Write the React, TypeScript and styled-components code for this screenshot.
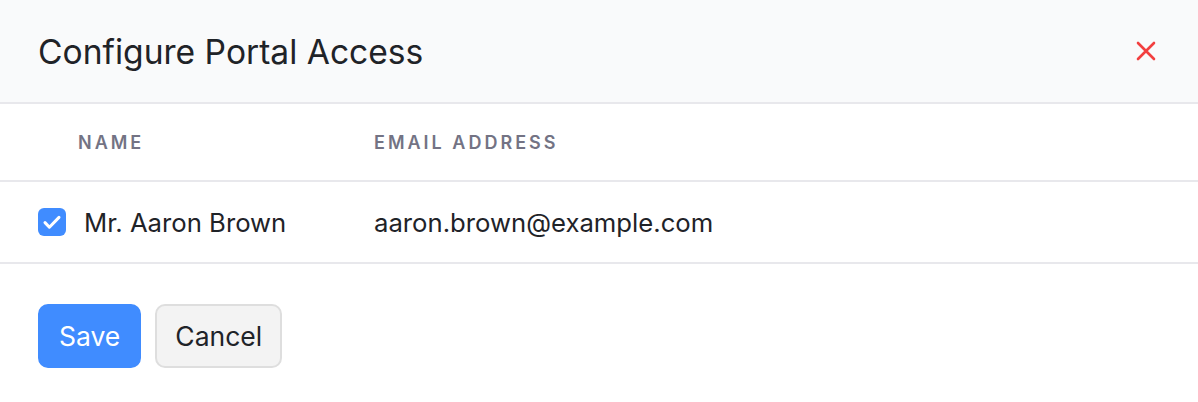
import styled, { createGlobalStyle } from "styled-components";

const GlobalStyle = createGlobalStyle`
  html, body {
    margin: 0;
    padding: 0;
    background: #ffffff;
  }
  body {
    font-family: Inter, "Noto Sans", sans-serif;
    -webkit-font-smoothing: antialiased;
  }
`;

const App = () => {
  return (
    <SModal>
      <GlobalStyle />
      <SHeader>
        <STitle>Configure Portal Access</STitle>
        <SCloseButton aria-label="Close">
          <svg width="20" height="20" viewBox="0 0 20 20" fill="none">
            <path
              d="M2 2L18 18M18 2L2 18"
              stroke="#f23f3f"
              strokeWidth="2.6"
              strokeLinecap="round"
            />
          </svg>
        </SCloseButton>
      </SHeader>
      <STableHead>
        <SHeadCell $indent>Name</SHeadCell>
        <SHeadCell>Email Address</SHeadCell>
      </STableHead>
      <SRow>
        <SNameCell>
          <SCheckbox>
            <svg width="28" height="28" viewBox="0 0 28 28" fill="none">
              <path
                d="M7 14.6L11.4 19.2L21 9.4"
                stroke="#ffffff"
                strokeWidth="3"
                strokeLinecap="round"
                strokeLinejoin="round"
              />
            </svg>
          </SCheckbox>
          <SCellText>Mr. Aaron Brown</SCellText>
        </SNameCell>
        <SCellText>aaron.brown@example.com</SCellText>
      </SRow>
      <SFooter>
        <SButton $primary>Save</SButton>
        <SButton>Cancel</SButton>
      </SFooter>
    </SModal>
  );
};

const SModal = styled.div`
  width: 1198px;
  height: 402px;
  background: #ffffff;
  overflow: hidden;
`;

const SHeader = styled.div`
  display: flex;
  align-items: center;
  justify-content: space-between;
  height: 104px;
  padding: 0 40px 0 38px;
  box-sizing: border-box;
  background: #f9fafb;
  border-bottom: 2px solid #e8e8ec;
`;

const STitle = styled.h1`
  margin: 0;
  font-size: 33.6px;
  font-weight: 400;
  color: #1f2328;
  letter-spacing: 0;
`;

const SCloseButton = styled.button`
  display: flex;
  align-items: center;
  justify-content: center;
  width: 24px;
  height: 24px;
  padding: 0;
  border: none;
  background: transparent;
  cursor: pointer;
`;

const STableHead = styled.div`
  display: grid;
  grid-template-columns: 336px 1fr;
  align-items: center;
  height: 76px;
  padding-left: 38px;
  border-bottom: 2px solid #e8e8ec;
`;

const SHeadCell = styled.div<{ $indent?: boolean }>`
  padding-left: ${(p) => (p.$indent ? "40px" : "0")};
  font-size: 18px;
  font-weight: 600;
  letter-spacing: 3px;
  text-transform: uppercase;
  color: #737384;
`;

const SRow = styled.div`
  display: grid;
  grid-template-columns: 336px 1fr;
  align-items: center;
  height: 80px;
  padding-left: 38px;
  border-bottom: 2px solid #e8e8ec;
`;

const SNameCell = styled.div`
  display: flex;
  align-items: center;
  gap: 18px;
`;

const SCheckbox = styled.span`
  display: flex;
  align-items: center;
  justify-content: center;
  width: 28px;
  height: 28px;
  border-radius: 6px;
  background: #408cff;
`;

const SCellText = styled.span`
  font-size: 25.7px;
  color: #1f2328;
`;

const SFooter = styled.div`
  display: flex;
  gap: 14px;
  padding: 40px 38px;
`;

const SButton = styled.button<{ $primary?: boolean }>`
  height: 64px;
  padding: 0 ${(p) => (p.$primary ? "19px" : "18px")};
  border-radius: 10px;
  border: 2px solid ${(p) => (p.$primary ? "#408cff" : "#dedede")};
  background: ${(p) => (p.$primary ? "#408cff" : "#f3f3f3")};
  color: ${(p) => (p.$primary ? "#ffffff" : "#1f2328")};
  font-family: Inter, "Noto Sans", sans-serif;
  font-size: 26.5px;
  font-weight: 400;
  cursor: pointer;
`;

export default App;
